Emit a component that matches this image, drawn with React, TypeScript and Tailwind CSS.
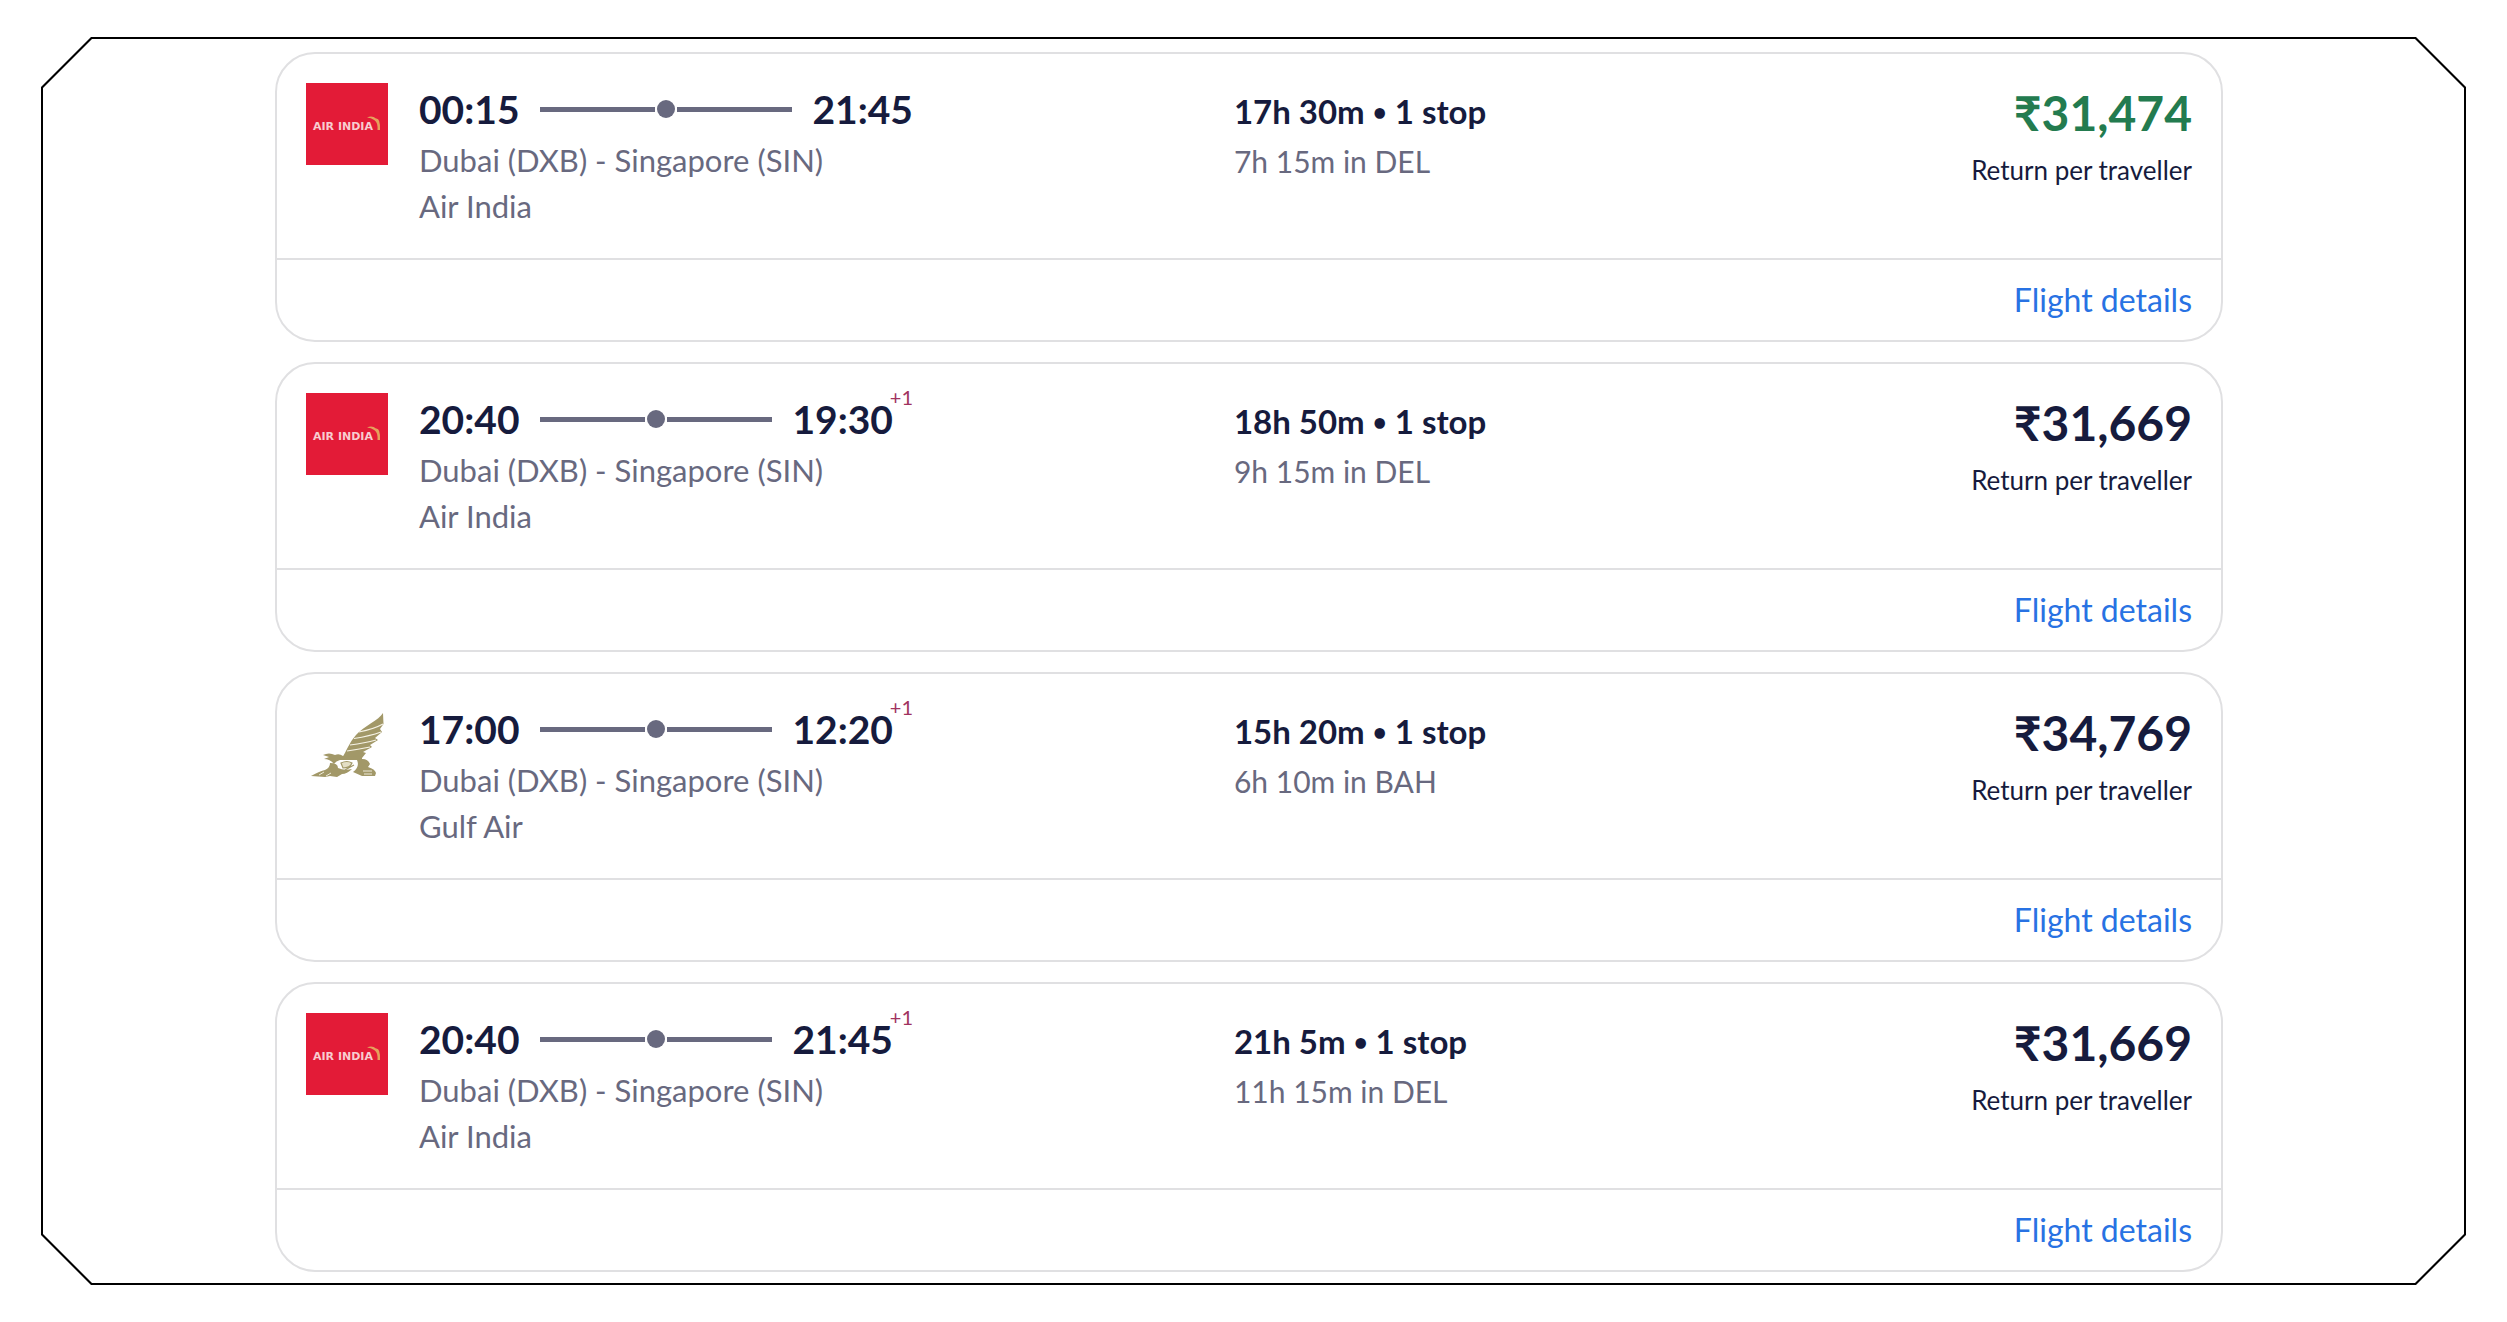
import React from 'react';

interface Flight {
  id: number;
  airline: 'Air India' | 'Gulf Air';
  depart: string;
  arrive: string;
  nextDay?: boolean;
  duration: string;
  layover: string;
  price: string;
  cheapest?: boolean;
}

const flights: Flight[] = [
  { id: 1, airline: 'Air India', depart: '00:15', arrive: '21:45', duration: '17h 30m', layover: '7h 15m in DEL', price: '₹31,474', cheapest: true },
  { id: 2, airline: 'Air India', depart: '20:40', arrive: '19:30', nextDay: true, duration: '18h 50m', layover: '9h 15m in DEL', price: '₹31,669' },
  { id: 3, airline: 'Gulf Air', depart: '17:00', arrive: '12:20', nextDay: true, duration: '15h 20m', layover: '6h 10m in BAH', price: '₹34,769' },
  { id: 4, airline: 'Air India', depart: '20:40', arrive: '21:45', nextDay: true, duration: '21h 5m', layover: '11h 15m in DEL', price: '₹31,669' },
];

function AirIndiaLogo() {
  return (
    <svg viewBox="0 0 82 82" className="size-[82px] shrink-0" role="img" aria-label="Air India">
      <rect width="82" height="82" fill="#e31b37" />
      <text x="7" y="47" fontSize="11" fontWeight="700" fill="#f8cdd0" fontFamily="DejaVu Sans, sans-serif">
        AIR INDIA
      </text>
      <path d="M61 34.5 Q66 32 70 35.5 Q74.5 35 74 47 L71.5 47 Q72 39.5 68.5 37.2 Q65 34.8 61 34.5Z" fill="#e5a15c" />
    </svg>
  );
}

function GulfAirLogo() {
  return (
    <svg viewBox="0 -4 82 82" className="size-[82px] shrink-0" role="img" aria-label="Gulf Air">
      {/* wing */}
      <path
        d="M77 6 C73 13 58 19 50 28 C43 36 41 43 36 51 L56 51 L60 46 L57 45 L66 40 L64 38 L72 33 L69 31 L76 25 L74 22 L77.500 17 Z"
        fill="#a29868"
      />
      <g fill="none" stroke="#f6f3e6" strokeWidth="1.2">
        <path d="M77 17 Q68 22 53 25" />
        <path d="M75 25 Q64 29 48 31.5" />
        <path d="M70 33 Q59 36 44 38" />
        <path d="M64 40 Q54 42 41 44" />
      </g>
      {/* head, body and tail */}
      <path d="M17 48 Q23 45 29 48 Q33 46 37 49 L56 50 L56 53 L34 53 Q30 54 28 57 Q24 52 18 52 L23 50 Z" fill="#a29868" />
      <path d="M24 56 Q32 56 32 61 Q38 64 46 62 Q41 67 36 67 L31 70 L24 69 L19 70 L5 69 Q14 64 19 63 Q24 61 24 56Z" fill="#a29868" />
      <path d="M51 53 Q61 50 64 57 L62 60 Q69 62 70 66 L69 69 L56 69 L47 65 Q54 60 51 53Z" fill="#a29868" />
      <path d="M35 56 Q41 53 46 56 Q44 61 37 61 Z M39 63 L48 58" fill="#e4dfc6" stroke="#a29868" strokeWidth="1.2" />
      <path d="M13 68 L18 65 M20 69 L25 66 M57 64 L66 64 M58 67 L66 67" fill="none" stroke="#f6f3e6" strokeWidth="0.9" />
    </svg>
  );
}

function FlightCard({ flight }: { flight: Flight }) {
  return (
    <article className="rounded-[40px] border-2 border-[#e0e0e2]">
      <div className="grid min-h-[206px] grid-cols-[49.2%_1fr_auto] border-b-2 border-[#e0e0e2] px-[29px] pt-[29px]">
        <div className="flex gap-[31px]">
          {flight.airline === 'Air India' ? <AirIndiaLogo /> : <GulfAirLogo />}
          <div className="w-[494px]">
            <div className="relative mb-0.5 flex h-[52px] items-center gap-5 text-[39px] font-bold text-[#161b3d]">
              <span>{flight.depart}</span>
              <div className="flex flex-1 items-center gap-0.5">
                <span className="h-[5px] flex-1 bg-[#68697f]" />
                <span className="size-[18px] rounded-full bg-[#68697f]" />
                <span className="h-[5px] flex-1 bg-[#68697f]" />
              </div>
              <span className={flight.nextDay ? 'pr-5' : ''}>{flight.arrive}</span>
              {flight.nextDay && (
                <sup className="absolute -top-4 right-0 text-[20px] leading-[40px] font-normal text-[#a0325f]">+1</sup>
              )}
            </div>
            <p className="text-[31px] leading-[46px] text-[#68697f]">Dubai (DXB) - Singapore (SIN)</p>
            <p className="text-[31px] leading-[46px] text-[#68697f]">{flight.airline}</p>
          </div>
        </div>

        <div>
          <p className="text-[33px] leading-[56px] font-bold text-[#161b3d]">
            {flight.duration} <span className="align-[3px] text-[24px]">•</span> 1 stop
          </p>
          <p className="text-[30px] leading-[42px] text-[#68697f]">{flight.layover}</p>
        </div>

        <div className="text-right">
          <p className={`text-[48px] leading-[60px] font-bold ${flight.cheapest ? 'text-[#237b4f]' : 'text-[#161b3d]'}`}>
            {flight.price}
          </p>
          <p className="text-[26px] leading-[54px] text-[#161b3d]">Return per traveller</p>
        </div>
      </div>

      <div className="flex h-20 items-center justify-end px-[29px]">
        <a href="#details" className="text-[32px] text-[#2872e3]">Flight details</a>
      </div>
    </article>
  );
}

export default function App() {
  return (
    <main className="bg-white px-[41px] py-[37px] font-[Lato,sans-serif]">
      {/* Frame with cut corners: black shape under a slightly smaller white one */}
      <div className="bg-black p-0.5 [clip-path:polygon(50px_0,calc(100%-50px)_0,100%_50px,100%_calc(100%-50px),calc(100%-50px)_100%,50px_100%,0_calc(100%-50px),0_50px)]">
        <div className="flex flex-col gap-5 bg-white pt-[13px] pr-[241px] pb-[11px] pl-[232px] [clip-path:polygon(49px_0,calc(100%-49px)_0,100%_49px,100%_calc(100%-49px),calc(100%-49px)_100%,49px_100%,0_calc(100%-49px),0_49px)]">
          {flights.map((flight) => (
            <FlightCard key={flight.id} flight={flight} />
          ))}
        </div>
      </div>
    </main>
  );
}
